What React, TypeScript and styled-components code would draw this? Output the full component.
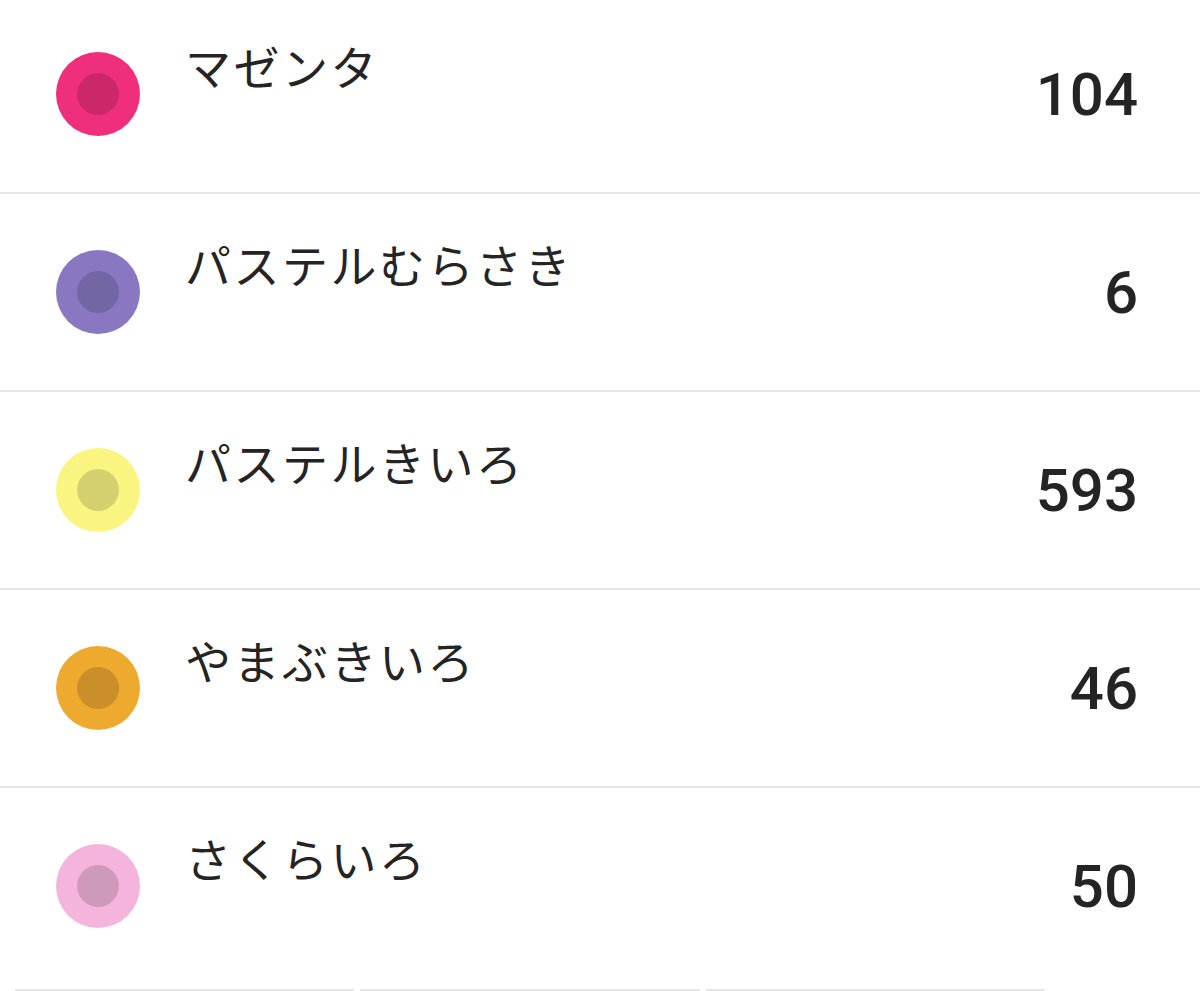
import React from "react";
import styled, { createGlobalStyle } from "styled-components";

const GlobalStyle = createGlobalStyle`
  html, body {
    margin: 0;
    padding: 0;
    background: #ffffff;
  }
  body {
    font-family: "Noto Sans CJK JP", "Noto Sans", Roboto, sans-serif;
    overflow: hidden;
  }
`;

const Page = styled.div`
  width: 1200px;
  height: 991px;
  overflow: hidden;
  background: #ffffff;
  display: flex;
  flex-direction: column;
`;

const List = styled.ul`
  list-style: none;
  margin: -4px 0 0 0;
  padding: 0;
  display: flex;
  flex-direction: column;
`;

const Row = styled.li`
  height: 196px;
  border-bottom: 2px solid #e6e6e6;
  display: flex;
  align-items: center;
  padding: 0 62px 0 56px;
  &:last-child {
    border-bottom: none;
  }
`;

const Dot = styled.div<{ $color: string }>`
  flex: none;
  width: 84px;
  height: 84px;
  border-radius: 50%;
  background: ${(p) => p.$color};
  display: flex;
  align-items: center;
  justify-content: center;
  &::after {
    content: "";
    width: 42px;
    height: 42px;
    border-radius: 50%;
    background: rgba(0, 0, 0, 0.15);
  }
`;

const Label = styled.div`
  flex: 1;
  align-self: flex-start;
  margin-top: 43px;
  margin-left: 45px;
  font-family: "Noto Sans CJK JP", "Noto Sans", sans-serif;
  font-size: 46px;
  line-height: 52px;
  letter-spacing: 2.5px;
  color: #242424;
`;

const Count = styled.div`
  flex: none;
  font-family: Roboto, "Liberation Sans", sans-serif;
  font-weight: 500;
  font-size: 60px;
  line-height: 1;
  color: #242424;
  margin-top: 2px;
`;

const CardEdges = styled.div`
  display: flex;
  gap: 6px;
  padding: 0 155px 0 15px;
  margin-top: 5px;
`;

const CardEdge = styled.div`
  flex: 1;
  height: 2px;
  background: #e4e4e4;
`;

const items = [
  { name: "マゼンタ", count: 104, color: "#EF2F7B" },
  { name: "パステルむらさき", count: 6, color: "#8977C1" },
  { name: "パステルきいろ", count: 593, color: "#FAF580" },
  { name: "やまぶきいろ", count: 46, color: "#EEA92F" },
  { name: "さくらいろ", count: 50, color: "#F4B4DC" },
];

export default function App() {
  return (
    <Page>
      <GlobalStyle />
      <List>
        {items.map((it) => (
          <Row key={it.name}>
            <Dot $color={it.color} />
            <Label>{it.name}</Label>
            <Count>{it.count}</Count>
          </Row>
        ))}
      </List>
      <CardEdges>
        <CardEdge />
        <CardEdge />
        <CardEdge />
      </CardEdges>
    </Page>
  );
}
